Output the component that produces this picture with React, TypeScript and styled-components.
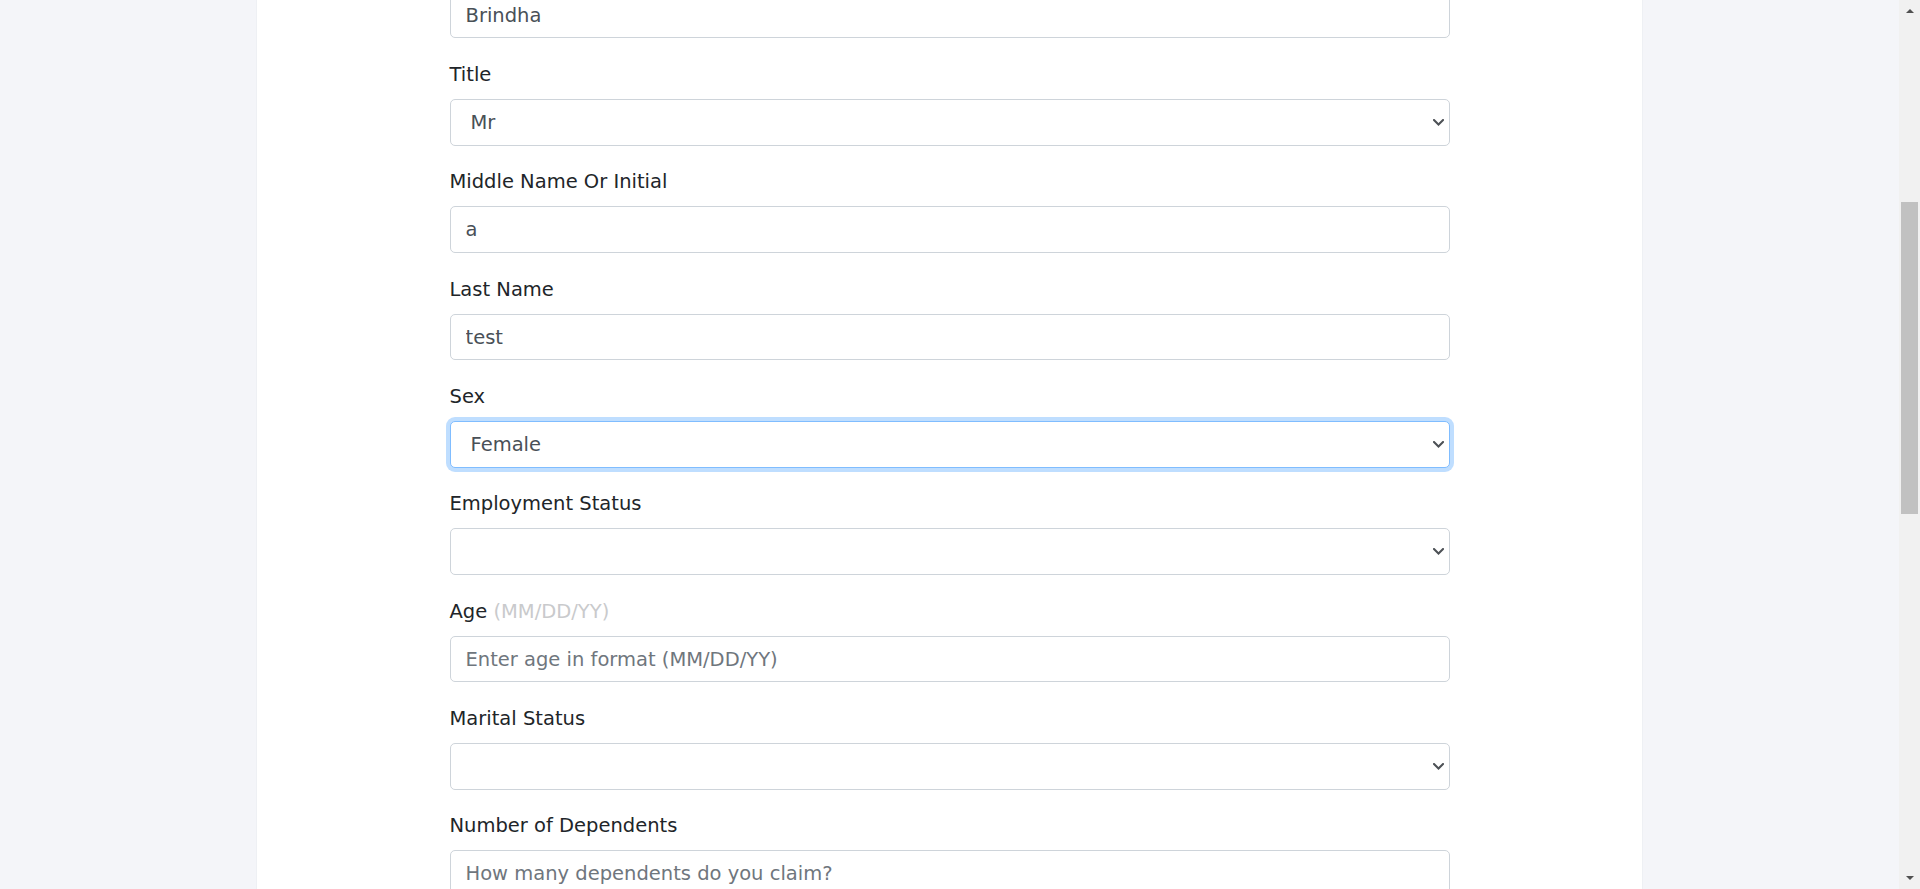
import React from "react";
import styled, { createGlobalStyle, css } from "styled-components";

const GlobalStyle = createGlobalStyle`
  html, body {
    margin: 0;
    padding: 0;
    height: 100%;
    overflow: hidden;
    background: #f4f5f9;
  }
  #root {
    height: 100%;
  }
  * {
    box-sizing: border-box;
  }
`;

const Screen = styled.div`
  display: flex;
  height: 889px;
  width: 1920px;
  font-family: "DejaVu Sans", "Noto Sans", sans-serif;
`;

const Viewport = styled.main`
  flex: 1;
  height: 100%;
  overflow: hidden;
  background: #f4f5f9;
`;

const Panel = styled.section`
  display: flow-root;
  width: 1387px;
  height: 100%;
  margin: 0 auto;
  background: #ffffff;
  border-left: 1px solid #eef0f4;
  border-right: 1px solid #eef0f4;
`;

const Form = styled.form`
  width: 1000px;
  margin: -8.2px auto 0;
  display: flex;
  flex-direction: column;
  gap: 20.83px;
`;

const Group = styled.div`
  display: flex;
  flex-direction: column;
`;

const Label = styled.label`
  display: block;
  height: 31px;
  line-height: 32px;
  margin-bottom: 9px;
  font-size: 19.5px;
  color: #212529;
  white-space: nowrap;
`;

const Hint = styled.span`
  color: #c9cacc;
`;

const fieldBase = css`
  display: block;
  width: 100%;
  height: 46.5px;
  margin: 0;
  border: 1px solid #ced4da;
  border-radius: 5px;
  background: #ffffff;
  font-family: "DejaVu Sans", "Noto Sans", sans-serif;
  font-size: 19.5px;
  color: #495057;
  outline: none;
`;

const TextInput = styled.input`
  ${fieldBase};
  padding: 0 15px;
  &::placeholder {
    color: #6f767d;
    opacity: 1;
  }
`;

const SelectWrap = styled.div`
  position: relative;
`;

const Select = styled.select<{ $focused?: boolean }>`
  ${fieldBase};
  appearance: none;
  -webkit-appearance: none;
  padding: 0 30px 0 20px;
  ${(p) =>
    p.$focused &&
    css`
      border-color: #80bdff;
      box-shadow: 0 0 0 4px rgba(0, 123, 255, 0.25);
    `}
`;

const Chevron = styled.svg`
  position: absolute;
  right: 6px;
  top: 50%;
  width: 11px;
  height: 7px;
  margin-top: -3.5px;
  pointer-events: none;
`;

const Scrollbar = styled.aside`
  width: 21px;
  height: 100%;
  background: #f1f1f1;
  display: flex;
  flex-direction: column;
  align-items: center;
`;

const Arrow = styled.div<{ $down?: boolean }>`
  width: 0;
  height: 0;
  border-left: 4.5px solid transparent;
  border-right: 4.5px solid transparent;
  ${(p) =>
    p.$down
      ? css`
          border-top: 4px solid #505050;
          margin-top: auto;
          margin-bottom: 9px;
        `
      : css`
          border-bottom: 4px solid #505050;
          margin-top: 9px;
        `}
`;

const Thumb = styled.div`
  width: 17px;
  height: 312px;
  margin-top: 189px;
  background: #c1c1c1;
`;

const ChevronIcon = () => (
  <Chevron viewBox="0 0 11 7">
    <polyline
      points="1,1 5.5,5.5 10,1"
      fill="none"
      stroke="#4d5156"
      strokeWidth="2"
      strokeLinecap="square"
    />
  </Chevron>
);

type SelectFieldProps = {
  label: React.ReactNode;
  value: string;
  options: string[];
  focused?: boolean;
};

const SelectField = ({ label, value, options, focused }: SelectFieldProps) => (
  <Group>
    <Label>{label}</Label>
    <SelectWrap>
      <Select defaultValue={value} $focused={focused}>
        {options.map((o) => (
          <option key={o} value={o}>
            {o}
          </option>
        ))}
      </Select>
      <ChevronIcon />
    </SelectWrap>
  </Group>
);

type InputFieldProps = {
  label?: React.ReactNode;
  value?: string;
  placeholder?: string;
};

const InputField = ({ label, value, placeholder }: InputFieldProps) => (
  <Group>
    {label && <Label>{label}</Label>}
    <TextInput type="text" defaultValue={value} placeholder={placeholder} />
  </Group>
);

export default function App() {
  return (
    <>
      <GlobalStyle />
      <Screen>
        <Viewport>
          <Panel>
            <Form onSubmit={(e) => e.preventDefault()}>
              <InputField value="Brindha" />
              <SelectField label="Title" value="Mr" options={["", "Mr", "Mrs", "Ms", "Dr"]} />
              <InputField label="Middle Name Or Initial" value="a" />
              <InputField label="Last Name" value="test" />
              <SelectField label="Sex" value="Female" options={["", "Male", "Female"]} focused />
              <SelectField
                label="Employment Status"
                value=""
                options={["", "Employed", "Self-Employed", "Unemployed", "Retired"]}
              />
              <InputField
                label={
                  <>
                    Age <Hint>(MM/DD/YY)</Hint>
                  </>
                }
                placeholder="Enter age in format (MM/DD/YY)"
              />
              <SelectField
                label="Marital Status"
                value=""
                options={["", "Single", "Married", "Divorced", "Widowed"]}
              />
              <InputField
                label="Number of Dependents"
                placeholder="How many dependents do you claim?"
              />
            </Form>
          </Panel>
        </Viewport>
        <Scrollbar>
          <Arrow />
          <Thumb />
          <Arrow $down />
        </Scrollbar>
      </Screen>
    </>
  );
}
